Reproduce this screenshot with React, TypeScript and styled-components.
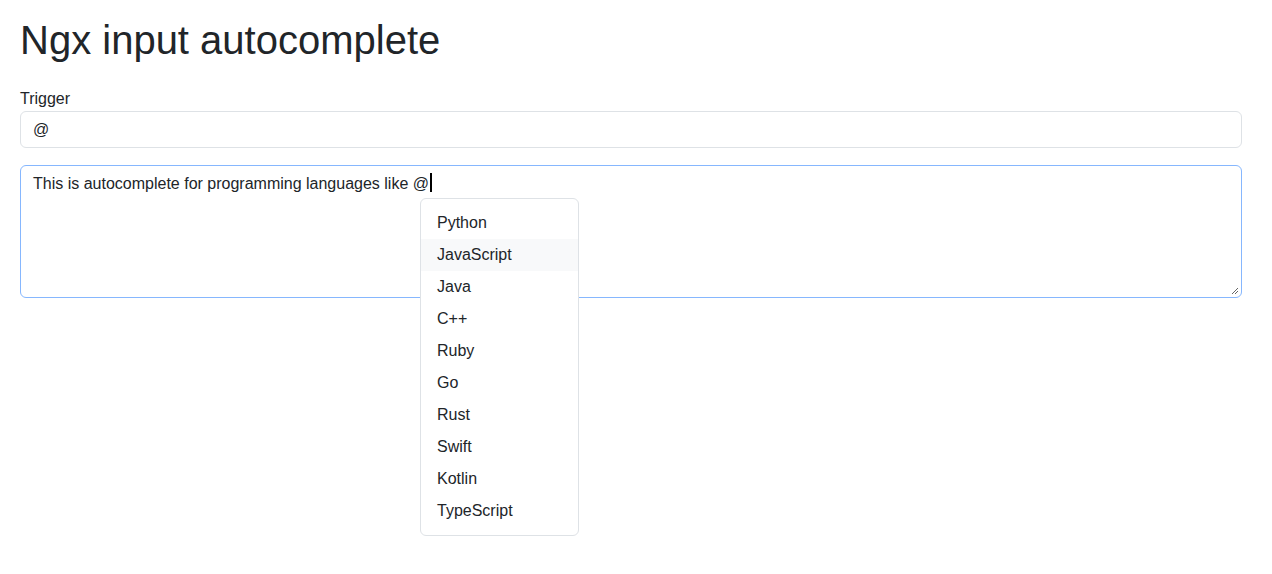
import React from "react";
import styled, { createGlobalStyle } from "styled-components";

const Global = createGlobalStyle`
  html, body { margin: 0; padding: 0; background: #fff; }
  body {
    font-family: "Liberation Sans", Arial, sans-serif;
    color: #212529;
    font-size: 16px;
    line-height: 1.5;
  }
`;

const Page = styled.main`
  box-sizing: border-box;
  min-height: 100vh;
  padding: 16px 30px 20px 20px;
  display: flex;
  flex-direction: column;
`;

const Title = styled.h1`
  margin: 0 0 23px;
  font-size: 40px;
  font-weight: 500;
  line-height: 48px;
`;

const Field = styled.div`
  display: flex;
  flex-direction: column;
  margin-bottom: 17px;
`;

const Label = styled.label`
  font-size: 16px;
  line-height: 24px;
`;

const Input = styled.div`
  box-sizing: border-box;
  height: 37px;
  padding: 6px 12px;
  border: 1px solid #dee2e6;
  border-radius: 6px;
  font-size: 16px;
  line-height: 24px;
`;

const EditorWrap = styled.div`
  position: relative;
`;

const Editor = styled.div`
  box-sizing: border-box;
  height: 133px;
  padding: 6px 12px;
  border: 1px solid #86b7fe;
  border-radius: 6px;
  font-size: 16px;
  line-height: 24px;
`;

const Caret = styled.span`
  display: inline-block;
  width: 2px;
  height: 19px;
  background: #000;
  vertical-align: -3px;
  margin-left: 1px;
`;

const Grip = styled.svg`
  position: absolute;
  right: 3px;
  bottom: 3px;
`;

const Menu = styled.ul`
  position: absolute;
  left: 400px;
  top: 33px;
  box-sizing: border-box;
  width: 159px;
  margin: 0;
  padding: 8px 0;
  list-style: none;
  background: #fff;
  border: 1px solid #dee2e6;
  border-radius: 6px;
`;

const Item = styled.li<{ $active?: boolean }>`
  padding: 4px 16px;
  line-height: 24px;
  font-size: 16px;
  color: #212529;
  background: ${(p) => (p.$active ? "#f8f9fa" : "transparent")};
`;

const languages = [
  "Python",
  "JavaScript",
  "Java",
  "C++",
  "Ruby",
  "Go",
  "Rust",
  "Swift",
  "Kotlin",
  "TypeScript",
];

export default function App() {
  return (
    <>
      <Global />
      <Page>
        <Title>Ngx input autocomplete</Title>
        <Field>
          <Label>Trigger</Label>
          <Input>@</Input>
        </Field>
        <EditorWrap>
          <Editor>
            This is autocomplete for programming languages like @<Caret />
          </Editor>
          <Grip width="8" height="8" viewBox="0 0 8 8">
            <path d="M7 1 L1 7 M7 4 L4 7" stroke="#666" strokeWidth="1" />
          </Grip>
          <Menu>
            {languages.map((l) => (
              <Item key={l} $active={l === "JavaScript"}>
                {l}
              </Item>
            ))}
          </Menu>
        </EditorWrap>
      </Page>
    </>
  );
}
